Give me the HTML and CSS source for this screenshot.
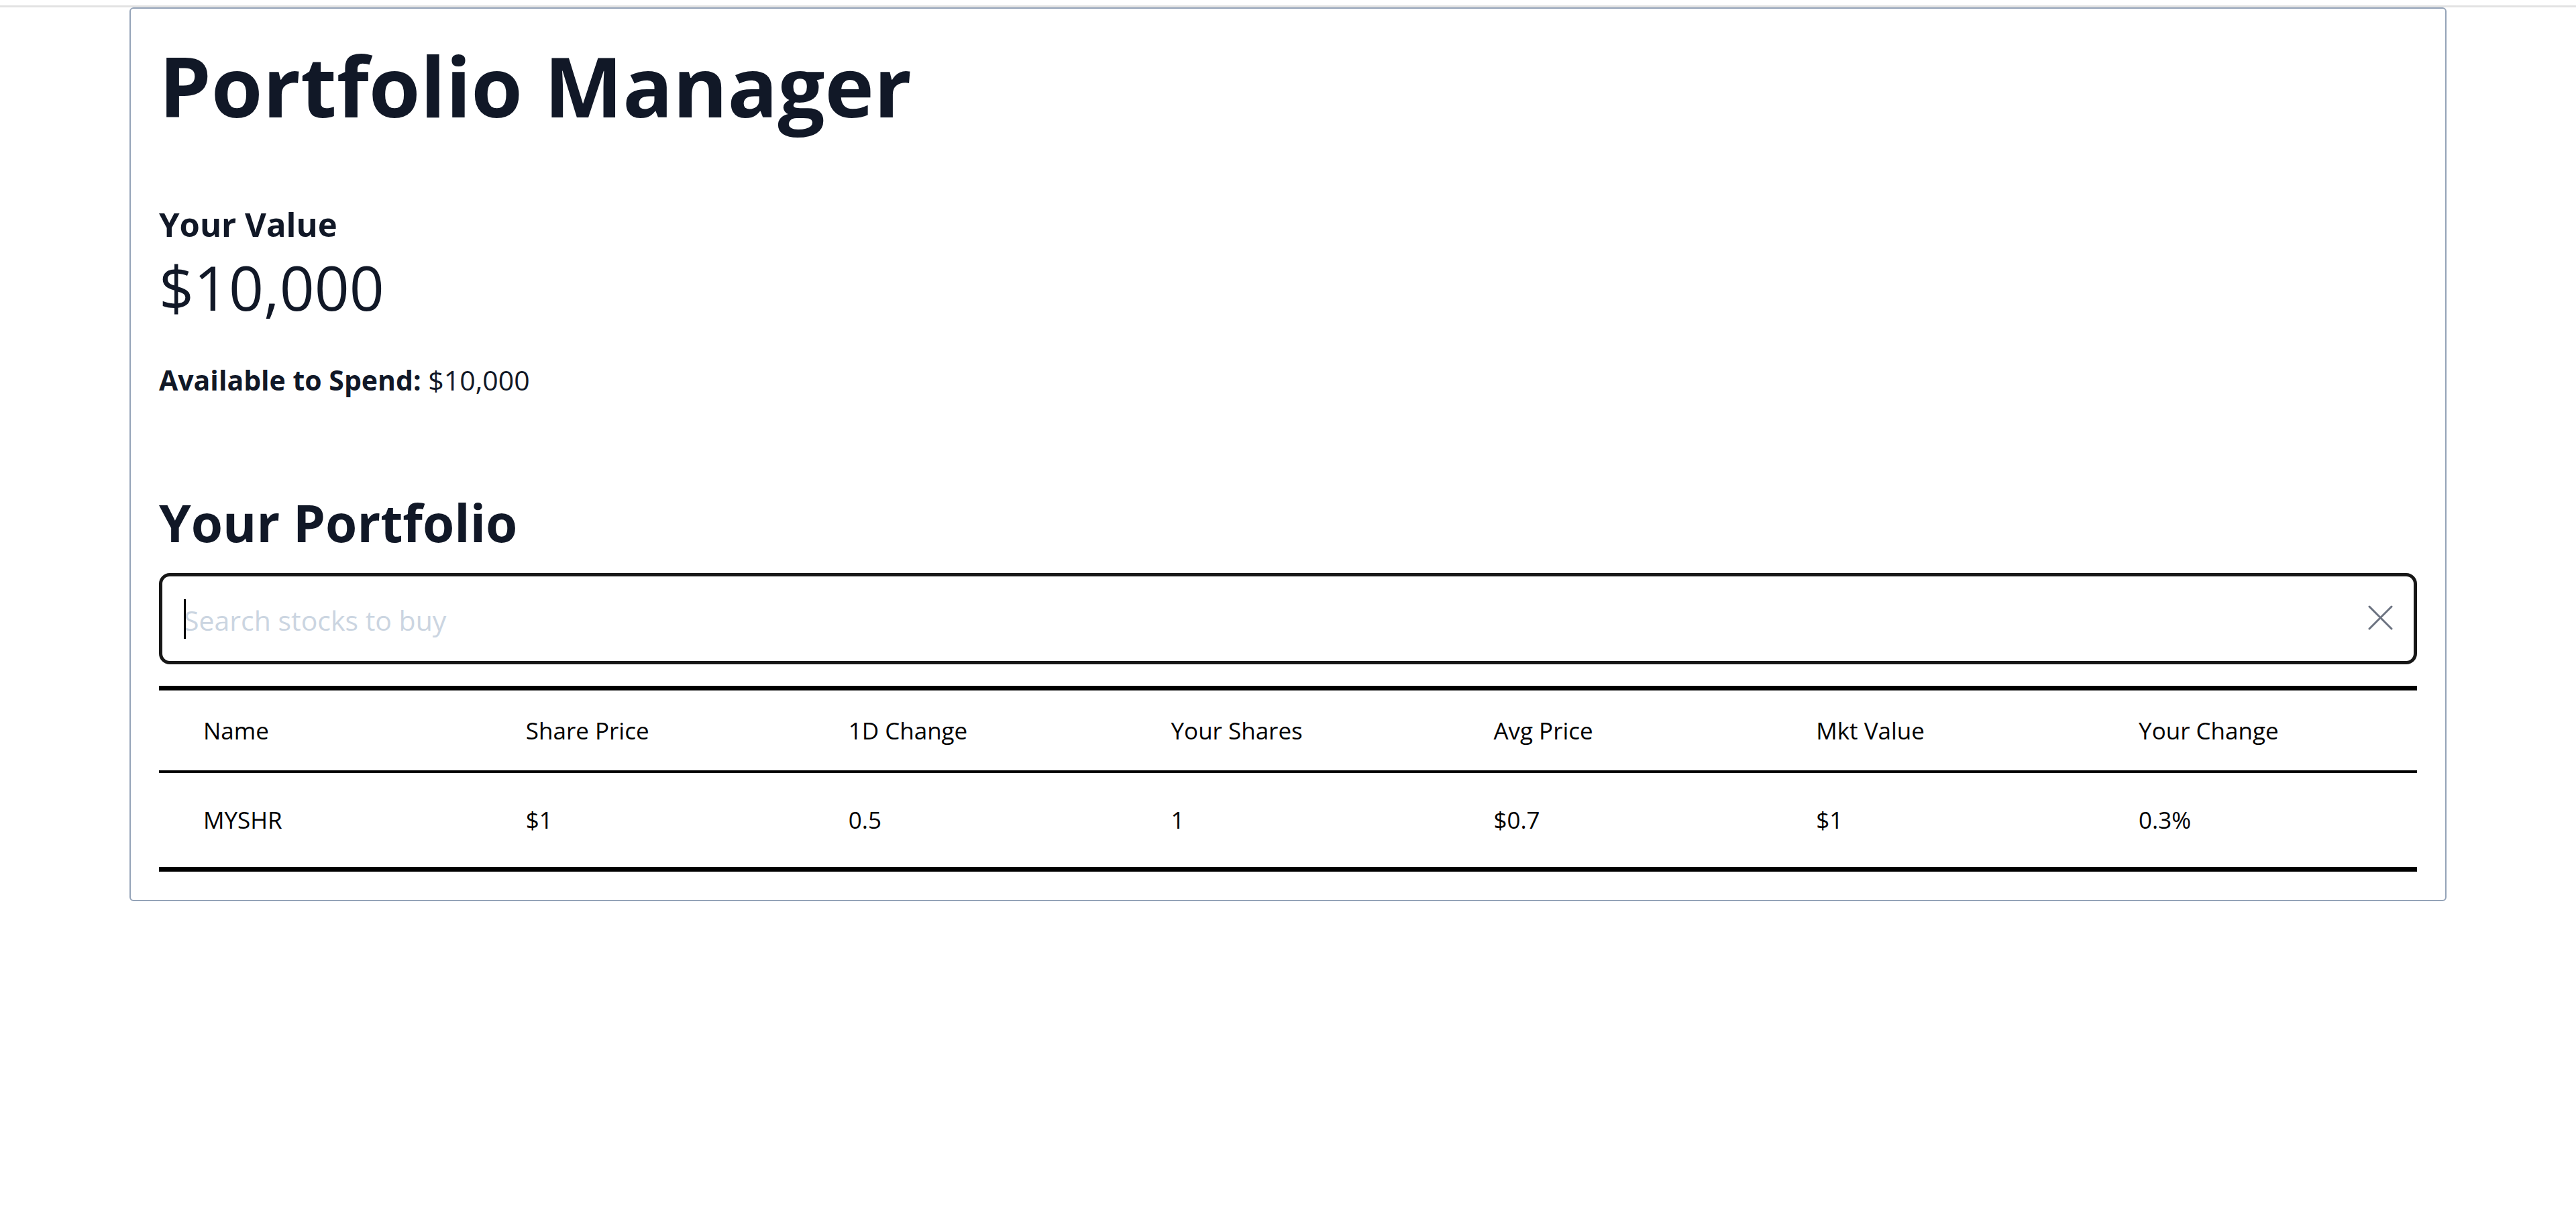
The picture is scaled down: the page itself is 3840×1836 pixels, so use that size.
FILE: index.html
```html
<!DOCTYPE html>
<html lang="en">
<head>
<meta charset="utf-8">
<title>Portfolio Manager</title>
<link rel="stylesheet" href="styles.css">
</head>
<body>
<div class="topline"></div>
<main class="card">
  <h1 class="title">Portfolio Manager</h1>
  <h2 class="value-label">Your Value</h2>
  <div class="value">$10,000</div>
  <p class="available"><strong>Available to Spend:</strong> $10,000</p>
  <h2 class="portfolio">Your Portfolio</h2>
  <div class="search">
    <span class="caret"></span>
    <input class="search-input" type="text" placeholder="Search stocks to buy">
    <svg class="clear" width="37" height="37" viewBox="0 0 37 37"><path d="M2 2L35 35M35 2L2 35" stroke="#6b7280" stroke-width="3" stroke-linecap="round" fill="none"/></svg>
  </div>
  <table class="holdings">
    <thead>
      <tr><th>Name</th><th>Share Price</th><th>1D Change</th><th>Your Shares</th><th>Avg Price</th><th>Mkt Value</th><th>Your Change</th></tr>
    </thead>
    <tbody>
      <tr><td>MYSHR</td><td>$1</td><td>0.5</td><td>1</td><td>$0.7</td><td>$1</td><td>0.3%</td></tr>
    </tbody>
  </table>
</main>
</body>
</html>
```
FILE: styles.css
```css
html, body {
  margin: 0;
  padding: 0;
  background: #ffffff;
}
body {
  font-family: "Open Sans", "Noto Sans", sans-serif;
  color: #111827;
}
.topline {
  margin-top: 8px;
  height: 3px;
  background: #e2e2e2;
}
.card {
  box-sizing: border-box;
  width: 3454px;
  margin: 0 auto;
  border: 2px solid #94a3b8;
  border-radius: 6px;
  padding: 39px 42px 42px;
}
.title {
  margin: 0;
  font-size: 124px;
  line-height: 150px;
  font-weight: 700;
}
.value-label {
  margin: 97px 0 0;
  font-size: 49px;
  line-height: 70px;
  font-weight: 700;
}
.value {
  margin-top: 4px;
  font-size: 91px;
  line-height: 110px;
  font-weight: 400;
}
.available {
  margin: 53px 0 0;
  font-size: 41px;
  line-height: 60px;
}
.available strong {
  font-weight: 700;
}
.portfolio {
  margin: 132px 0 0;
  font-size: 76.5px;
  line-height: 100px;
  font-weight: 700;
}
.search {
  position: relative;
  margin-top: 26px;
  height: 136px;
  box-sizing: border-box;
  border: 5px solid #171717;
  border-radius: 16px;
  display: flex;
  align-items: center;
  padding: 0 31px 0 32px;
  gap: 20px;
}
.search-input {
  flex: 1;
  box-sizing: border-box;
  border: 0;
  outline: none;
  padding: 4px 0 0;
  margin: 0;
  height: 126px;
  font-family: inherit;
  font-size: 41px;
  color: #111827;
  background: transparent;
}
.search-input::placeholder {
  color: #cbd5e1;
}
.caret {
  position: absolute;
  left: 32px;
  top: 34px;
  width: 3px;
  height: 59px;
  background: #000;
}
.clear {
  flex: none;
  display: block;
  margin-top: -4px;
}
.holdings {
  margin-top: 32px;
  width: 100%;
  table-layout: fixed;
  border-collapse: separate;
  border-spacing: 0;
  color: #000;
  font-size: 35px;
  line-height: 40px;
}
.holdings th {
  text-align: left;
  font-weight: 400;
  padding: 40px 0 39px 66px;
  border-top: 7px solid #000;
  border-bottom: 4px solid #000;
}
.holdings td {
  padding: 50px 0 50px 66px;
  border-bottom: 7px solid #000;
}
```
